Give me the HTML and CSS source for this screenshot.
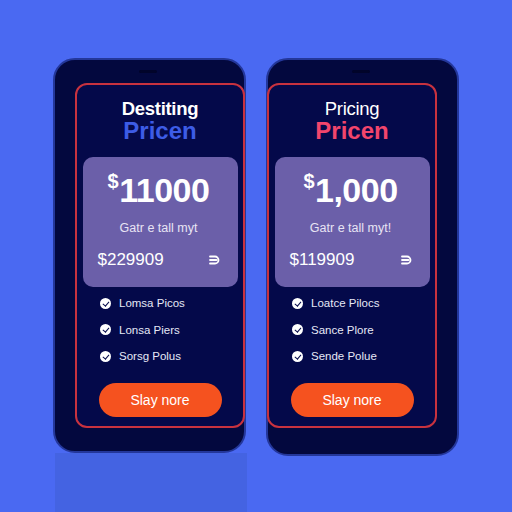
FILE: index.html
```html
<!DOCTYPE html>
<html>
<head>
    <title>Pricing Plans</title>
    <meta name="viewport" content="width=device-width, initial-scale=1.0">
    <link rel="stylesheet" href="styles.css">
</head>
<body>
    <div class="stage">
        <div class="column">
            <div class="phone">
                <div class="notch"></div>
                <div class="plan plan-left">
                    <h2 class="plan-title">Destiting</h2>
                    <h1 class="plan-name blue">Pricen</h1>

                    <div class="price-box">
                        <div class="price"><span class="cur">$</span>11000</div>
                        <p class="price-note">Gatr e tall myt</p>
                        <div class="price-row">
                            <span class="price-alt">$229909</span>
                            <svg class="row-icon" viewBox="0 0 12 12" width="12" height="12">
                                <path d="M2 2.5h5a3.5 3.5 0 0 1 0 7H2M2 6h6.5" fill="none" stroke="#fff" stroke-width="1.8" stroke-linecap="round"/>
                            </svg>
                        </div>
                    </div>

                    <ul class="features">
                        <li><span class="check"></span>Lomsa Picos</li>
                        <li><span class="check"></span>Lonsa Piers</li>
                        <li><span class="check"></span>Sorsg Polus</li>
                    </ul>

                    <button class="cta">Slay nore</button>
                </div>
            </div>
            <div class="reflection"></div>
        </div>

        <div class="column">
            <div class="phone">
                <div class="notch"></div>
                <div class="plan plan-right">
                    <h2 class="plan-title light">Pricing</h2>
                    <h1 class="plan-name pink">Pricen</h1>

                    <div class="price-box">
                        <div class="price"><span class="cur">$</span>1,000</div>
                        <p class="price-note">Gatr e tall myt!</p>
                        <div class="price-row">
                            <span class="price-alt">$119909</span>
                            <svg class="row-icon" viewBox="0 0 12 12" width="12" height="12">
                                <path d="M2 2.5h5a3.5 3.5 0 0 1 0 7H2M2 6h6.5" fill="none" stroke="#fff" stroke-width="1.8" stroke-linecap="round"/>
                            </svg>
                        </div>
                    </div>

                    <ul class="features">
                        <li><span class="check"></span>Loatce Pilocs</li>
                        <li><span class="check"></span>Sance Plore</li>
                        <li><span class="check"></span>Sende Polue</li>
                    </ul>

                    <button class="cta">Slay nore</button>
                </div>
            </div>
        </div>
    </div>
</body>
</html>
```

FILE: styles.css
```css
body {
    margin: 0;
    padding: 0;
    background-color: #4a69f2;
    font-family: "Liberation Sans", Arial, sans-serif;
    color: #fff;
}
.stage {
    display: flex;
    gap: 20px;
    padding: 58px 0 0 53px;
    height: 454px;
    overflow: hidden;
}
.column {
    display: flex;
    flex-direction: column;
    width: 193px;
}
.phone {
    position: relative;
    box-sizing: border-box;
    height: 398px;
    background-color: #03083e;
    border: 2px solid #24379a;
    border-radius: 22px;
    padding-top: 23px;
}
.notch {
    position: absolute;
    top: 10px;
    left: 84px;
    width: 18px;
    height: 3px;
    border-radius: 2px;
    background-color: #01042a;
}
.reflection {
    height: 60px;
    margin: 0 -1px 0 2px;
    background-color: #4463e2;
}
.plan {
    box-sizing: border-box;
    width: 170px;
    height: 345px;
    border: 2px solid #c8323f;
    border-radius: 12px;
    background-color: #04094a;
    display: flex;
    flex-direction: column;
    align-items: center;
    padding: 13px 6px 0;
}
.plan-left {
    margin-left: 20px;
}
.plan-right {
    margin-left: -1px;
}
.plan-title {
    margin: 0;
    font-size: 18.5px;
    font-weight: bold;
    line-height: 22px;
    letter-spacing: -0.3px;
}
.plan-title.light {
    font-weight: normal;
}
.plan-name {
    margin: 0;
    font-size: 24px;
    font-weight: bold;
    line-height: 22px;
}
.blue {
    color: #3d5ce6;
}
.pink {
    color: #f2456c;
}
.price-box {
    box-sizing: border-box;
    width: 155px;
    height: 130px;
    margin-top: 15px;
    border-radius: 10px;
    background-color: #6b5fa9;
    padding: 14px 18px 0 15px;
    display: flex;
    flex-direction: column;
    align-items: center;
}
.price {
    font-size: 34px;
    font-weight: bold;
    line-height: 38px;
    letter-spacing: -0.5px;
}
.cur {
    font-size: 20px;
    line-height: 20px;
    vertical-align: top;
    margin-right: 1px;
}
.price-note {
    margin: 12px 0 0;
    font-size: 12.5px;
    line-height: 14px;
    color: #e8e4f4;
}
.price-row {
    align-self: stretch;
    display: flex;
    justify-content: space-between;
    align-items: center;
    margin-top: 15px;
}
.price-alt {
    font-size: 17px;
    line-height: 20px;
}
.features {
    list-style: none;
    align-self: stretch;
    margin: 3px 0 0;
    padding: 0 0 0 17px;
}
.features li {
    display: flex;
    align-items: center;
    gap: 8px;
    height: 26.5px;
    font-size: 11.5px;
    color: #e6e8f6;
}
.check {
    position: relative;
    width: 11px;
    height: 11px;
    border-radius: 50%;
    background-color: #fff;
}
.check::after {
    content: "";
    position: absolute;
    left: 3.5px;
    top: 2px;
    width: 2.5px;
    height: 5px;
    border: solid #04094a;
    border-width: 0 1.8px 1.8px 0;
    transform: rotate(40deg);
}
.cta {
    margin-top: 13px;
    width: 123px;
    height: 34px;
    border: none;
    border-radius: 17px;
    background-color: #f5521f;
    color: #fff;
    font-family: "Liberation Sans", Arial, sans-serif;
    font-size: 14px;
}
```
